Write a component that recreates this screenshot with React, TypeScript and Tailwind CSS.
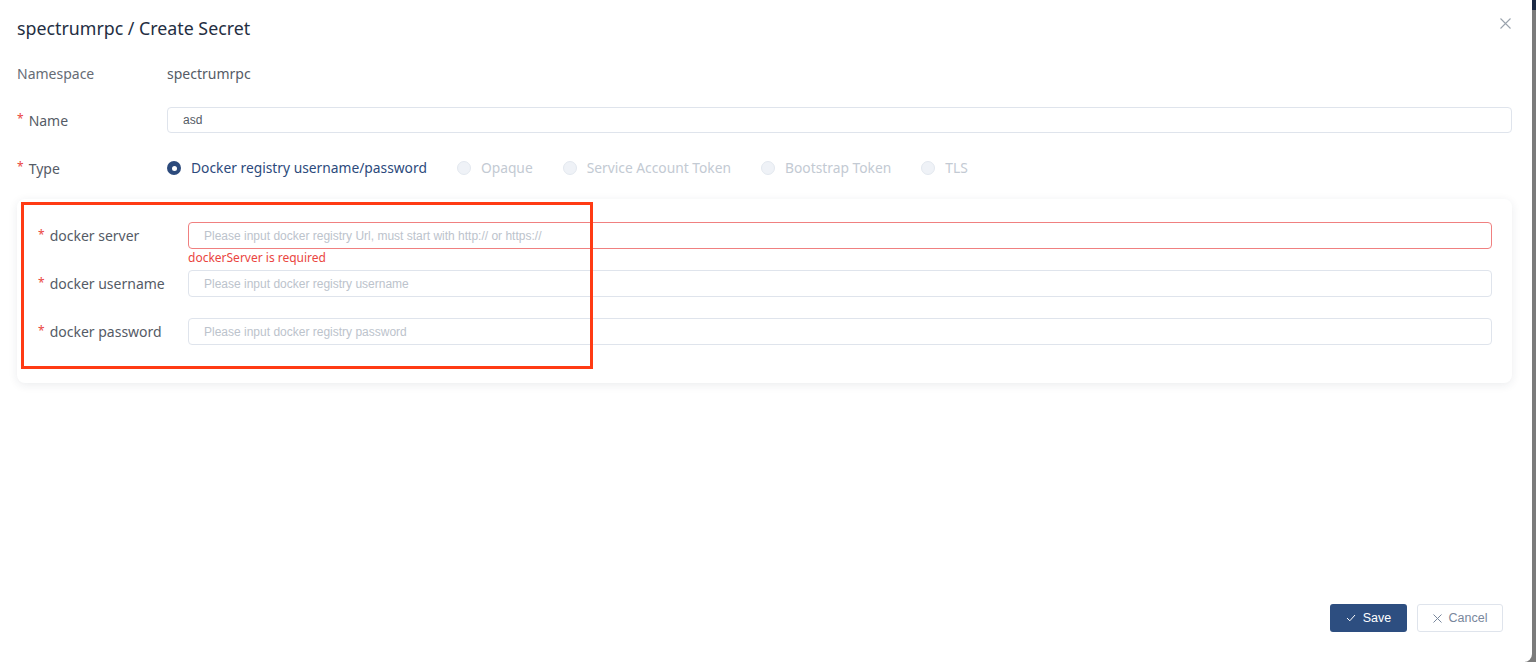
import React from "react";

const FONT = { fontFamily: '"Noto Sans", "Open Sans", sans-serif' };
const INPUT_FONT = { fontFamily: '"Liberation Sans", Arial, sans-serif' };

const types = [
  { label: "Docker registry username/password", checked: true },
  { label: "Opaque", checked: false },
  { label: "Service Account Token", checked: false },
  { label: "Bootstrap Token", checked: false },
  { label: "TLS", checked: false },
];

const Radio = ({ label, checked }: { label: string; checked: boolean }) => (
  <label className="flex items-center mr-[30px]">
    {checked ? (
      <span className="w-[14px] h-[14px] rounded-full bg-[#2c4a7c] flex items-center justify-center">
        <span className="w-[5px] h-[5px] rounded-full bg-white" />
      </span>
    ) : (
      <span className="w-[14px] h-[14px] rounded-full bg-[#eff2f7] border border-[#e3e8ef]" />
    )}
    <span
      className={
        "ml-[10px] text-[13.8px] " +
        (checked ? "text-[#2c4a7c]" : "text-[#c3cad3]")
      }
    >
      {label}
    </span>
  </label>
);

const Required = () => (
  <span className="text-[#ea4641] text-[12px] mr-[5px] relative top-[-1px]">*</span>
);

const DockerField = ({
  label,
  placeholder,
  error,
}: {
  label: string;
  placeholder: string;
  error?: string;
}) => (
  <div className="flex h-[48px]">
    <div className="w-[150px] h-[27px] flex items-center text-[14px] text-[#555b66]">
      <Required />
      {label}
    </div>
    <div className="flex-1">
      <div
        className={
          "h-[27px] rounded-[4px] border bg-white flex items-center px-[15px] text-[12px] text-[#bcc3cc] " +
          (error ? "border-[#f08080]" : "border-[#dfe4ec]")
        }
        style={INPUT_FONT}
      >
        {placeholder}
      </div>
      {error && (
        <div className="text-[12px] text-[#ea4641] leading-[17px]">{error}</div>
      )}
    </div>
  </div>
);

export default function App() {
  return (
    <div className="flex w-[1536px] h-[662px] bg-[#7b7b7b] overflow-hidden" style={FONT}>
      <div className="relative w-[1532px] h-[662px] bg-white rounded-br-[8px] flex flex-col">
        <div className="h-[56px] pl-[17px] pr-[21px] flex items-center justify-between">
          <h1 className="text-[17.8px] text-[#242e42]">spectrumrpc / Create Secret</h1>
          <svg width="11" height="11" viewBox="0 0 11 11" className="mb-[10px]">
            <path d="M0.5 0.5L10.5 10.5M10.5 0.5L0.5 10.5" stroke="#9aa3ad" strokeWidth="1.1" />
          </svg>
        </div>

        <div className="px-[17px] pr-[20px]">
          <div className="flex items-center h-[34px] text-[14px]">
            <div className="w-[150px] text-[#666c75]">Namespace</div>
            <div className="text-[#555b66]">spectrumrpc</div>
          </div>

          <div className="flex items-center h-[26px] mt-[17px] text-[14px]">
            <div className="w-[150px] text-[#555b66] flex items-center">
              <Required />
              Name
            </div>
            <div
              className="flex-1 h-[26px] rounded-[4px] border border-[#dfe4ec] flex items-center px-[15px] text-[12px] text-[#555b66]"
              style={INPUT_FONT}
            >
              asd
            </div>
          </div>

          <div className="flex items-center h-[28px] mt-[21px] text-[14px]">
            <div className="w-[150px] text-[#555b66] flex items-center">
              <Required />
              Type
            </div>
            <div className="flex items-center">
              {types.map((t) => (
                <Radio key={t.label} label={t.label} checked={t.checked} />
              ))}
            </div>
          </div>

          <div className="mt-[17px] h-[184px] rounded-lg bg-white shadow-[0_2px_10px_0_rgba(36,46,66,0.09)] pt-[23px] pl-[21px] pr-[20px]">
            <DockerField
              label="docker server"
              placeholder="Please input docker registry Url, must start with http:// or https://"
              error="dockerServer is required"
            />
            <DockerField
              label="docker username"
              placeholder="Please input docker registry username"
            />
            <DockerField
              label="docker password"
              placeholder="Please input docker registry password"
            />
          </div>
        </div>

        <div className="mt-auto flex justify-end gap-[10px] pr-[29px] pb-[30px]">
          <button
            className="h-[28px] w-[77px] rounded-[3px] bg-[#2d4e80] text-white text-[12.5px] flex items-center justify-center gap-[7px]"
            style={INPUT_FONT}
          >
            <svg width="10" height="8" viewBox="0 0 10 8">
              <path d="M1 4L3.8 6.8L9 1" stroke="white" strokeWidth="1" fill="none" />
            </svg>
            Save
          </button>
          <button
            className="h-[28px] w-[86px] rounded-[3px] border border-[#dfe4ec] bg-white text-[#79879c] text-[12.5px] flex items-center justify-center gap-[7px]"
            style={INPUT_FONT}
          >
            <svg width="9" height="9" viewBox="0 0 9 9">
              <path d="M0.5 0.5L8.5 8.5M8.5 0.5L0.5 8.5" stroke="#79879c" strokeWidth="1" />
            </svg>
            Cancel
          </button>
        </div>

        <div className="absolute left-[21px] top-[202px] w-[572px] h-[167px] border-[3px] border-[#ff3b14]" />
      </div>
      <div className="flex-1 flex flex-col">
        <div className="h-[10px] bg-[#1c2a44]" />
        <div className="flex-1 bg-[#7b7b7b]" />
      </div>
    </div>
  );
}
